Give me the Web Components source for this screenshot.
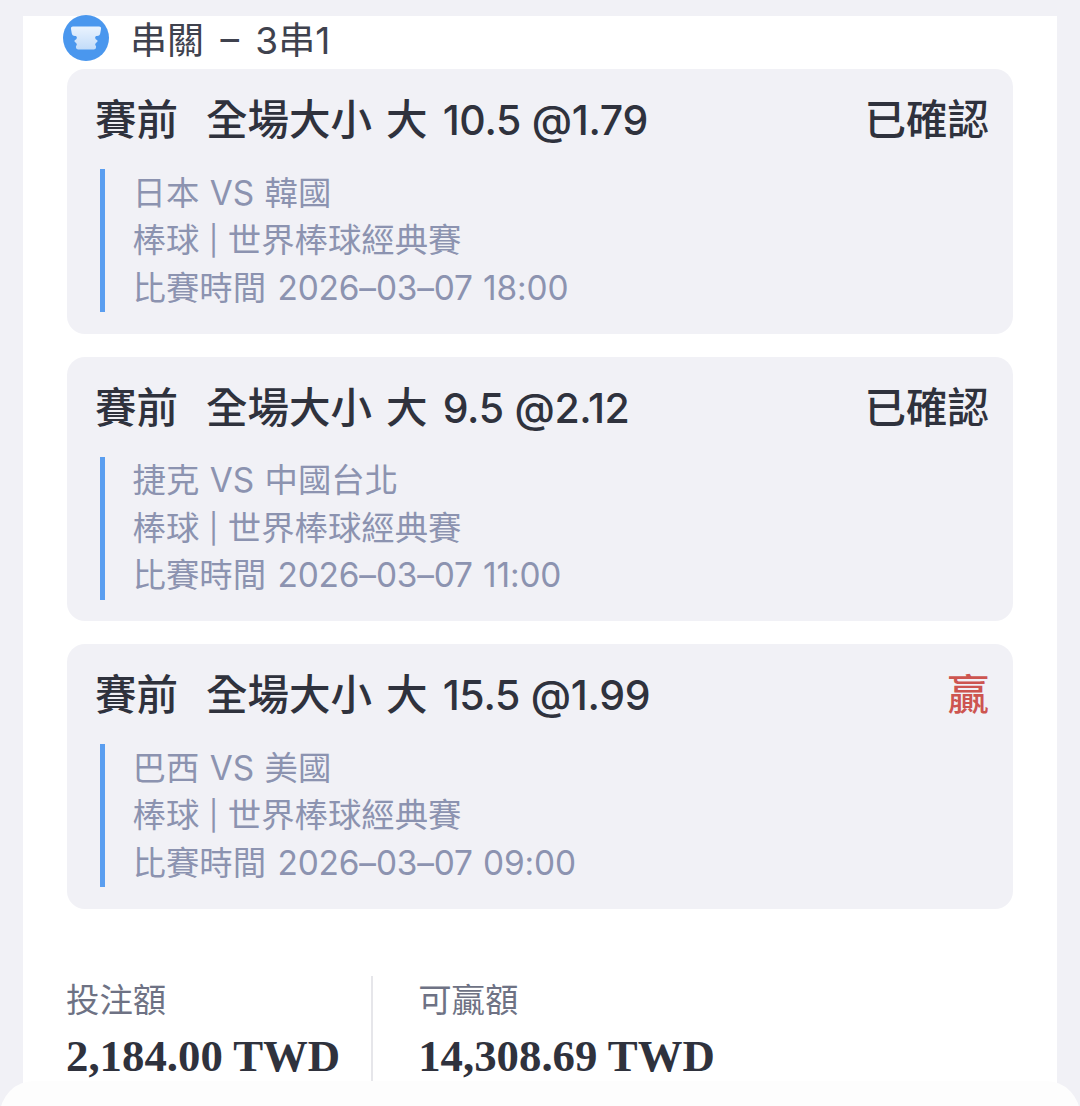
<!DOCTYPE html>
<html lang="zh-Hant">
<head>
<meta charset="utf-8">
<title>串關</title>
<style>
  html, body { margin: 0; height: 1106px; overflow: hidden; background: #f1f1f6; }
  body { font-family: Inter, "Noto Sans CJK TC", sans-serif; }
</style>
</head>
<body>
<bet-slip>
  <bet-header slot="header">串關 – 3串1</bet-header>
  <bet-leg market="全場大小 大" odds="10.5 @1.79" status="已確認" teams="日本 VS 韓國" time="2026–03–07 18:00"></bet-leg>
  <bet-leg market="全場大小 大" odds="9.5 @2.12" status="已確認" teams="捷克 VS 中國台北" time="2026–03–07 11:00"></bet-leg>
  <bet-leg market="全場大小 大" odds="15.5 @1.99" status="贏" win teams="巴西 VS 美國" time="2026–03–07 09:00"></bet-leg>
  <bet-summary slot="summary" stake="2,184.00 TWD" payout="14,308.69 TWD"></bet-summary>
</bet-slip>

<script>
class BetSlip extends HTMLElement {
  constructor() {
    super();
    this.attachShadow({ mode: "open" });
    this.shadowRoot.innerHTML = `
      <style>
        :host { display: block; position: relative; height: 1106px; overflow: hidden; }
        .panel { margin: 16px 23px 0; height: 1090px; box-sizing: border-box; background: #fff; padding: 0 44px; }
        .legs { display: flex; flex-direction: column; gap: 23px; }
        .sheet { position: absolute; left: 0; right: 0; top: 1081px; height: 60px; background: #fdfdfd; border-radius: 34px 34px 0 0; }
      </style>
      <div class="panel">
        <slot name="header"></slot>
        <div class="legs"><slot></slot></div>
        <slot name="summary"></slot>
      </div>
      <div class="sheet"></div>
    `;
  }
}

class BetHeader extends HTMLElement {
  constructor() {
    super();
    this.attachShadow({ mode: "open" });
    this.shadowRoot.innerHTML = `
      <style>
        :host { display: flex; align-items: center; height: 53px; color: #3f424e; font-size: 37px; line-height: 48px; word-spacing: 6px; white-space: nowrap; }
        svg { width: 46px; height: 46px; margin: -1px 21px 0 -4px; flex: none; align-self: flex-start; }
        span { margin-top: -3px; }
      </style>
      <svg viewBox="0 0 46 46" aria-hidden="true">
        <defs>
          <linearGradient id="g" x1="0" y1="0" x2="0" y2="1">
            <stop offset="0" stop-color="#eaf3fe"/>
            <stop offset="1" stop-color="#c2dcf9"/>
          </linearGradient>
        </defs>
        <circle cx="23" cy="23" r="23" fill="#4a97ee"/>
        <path d="M10 11.5 H36 Q38.5 11.5 38 14 L37.3 18 Q37 21 34 21 H33 Q31.5 22 32.5 24 L34.5 25.5 Q35 26.5 33.5 27.5 L32.5 28.5 Q31.5 30 33 31 Q33.5 34 31 34.5 H15 Q12.5 34 13 31 Q14.5 30 13.5 28.5 L12.5 27.5 Q11 26.5 11.5 25.5 L13.5 24 Q14.5 22 13 21 H12 Q9 21 8.7 18 L8 14 Q7.5 11.5 10 11.5 Z" fill="url(#g)"/>
      </svg>
      <span><slot></slot></span>
    `;
  }
}

class BetLeg extends HTMLElement {
  constructor() {
    super();
    this.attachShadow({ mode: "open" });
    const win = this.hasAttribute("win");
    this.shadowRoot.innerHTML = `
      <style>
        :host { display: block; box-sizing: border-box; height: 264.5px; padding: 24px 24px 0 28px; background: #f1f1f6; border-radius: 18px; }
        .top { display: flex; justify-content: space-between; align-items: center; height: 54px; font-size: 41.5px; line-height: 54px; font-weight: 500; color: #2f323d; white-space: nowrap; }
        .kind { margin-right: 28px; }
        .main { flex: 1; word-spacing: 3px; }
        .odds { margin-left: 1px; font-size: 41px; letter-spacing: -0.3px; word-spacing: 0; }
        .status { color: ${win ? "#cd5550" : "#2f323d"}; }
        .detail { margin: 22px 0 0 5px; height: 142.5px; border-left: 5px solid #5a9ef0; padding: 0.5px 0 0 27.5px; color: #8c93b0; font-size: 33.4px; line-height: 47.5px; word-spacing: 1px; white-space: nowrap; }
        .detail div { height: 47.5px; }
        .detail .league { word-spacing: 0; }
        .sep { font-size: 29px; vertical-align: 1px; }
        .date { margin-left: 1px; letter-spacing: -0.15px; }
      </style>
      <div class="top">
        <span class="kind">賽前</span>
        <span class="main">${this.getAttribute("market")} <span class="odds">${this.getAttribute("odds")}</span></span>
        <span class="status">${this.getAttribute("status")}</span>
      </div>
      <div class="detail">
        <div>${this.getAttribute("teams")}</div>
        <div class="league">棒球 <span class="sep">|</span> 世界棒球經典賽</div>
        <div>比賽時間 <span class="date">${this.getAttribute("time")}</span></div>
      </div>
    `;
  }
}

class BetSummary extends HTMLElement {
  constructor() {
    super();
    this.attachShadow({ mode: "open" });
    this.shadowRoot.innerHTML = `
      <style>
        :host { display: flex; margin: 67px 0 0 -1px; height: 105px; white-space: nowrap; }
        .cell { display: flex; flex-direction: column; }
        .cell + .cell { margin-left: 31px; padding-left: 45px; border-left: 2px solid #e6e6ea; }
        .label { color: #6e7284; font-size: 33.4px; line-height: 48px; }
        .value { margin-top: 8px; color: #2f323d; font: bold 44.8px/48px "Liberation Serif", "Noto Sans CJK TC", serif; }
      </style>
      <div class="cell">
        <div class="label">投注額</div>
        <div class="value">${this.getAttribute("stake")}</div>
      </div>
      <div class="cell">
        <div class="label">可贏額</div>
        <div class="value">${this.getAttribute("payout")}</div>
      </div>
    `;
  }
}

customElements.define("bet-slip", BetSlip);
customElements.define("bet-header", BetHeader);
customElements.define("bet-leg", BetLeg);
customElements.define("bet-summary", BetSummary);
</script>
</body>
</html>
